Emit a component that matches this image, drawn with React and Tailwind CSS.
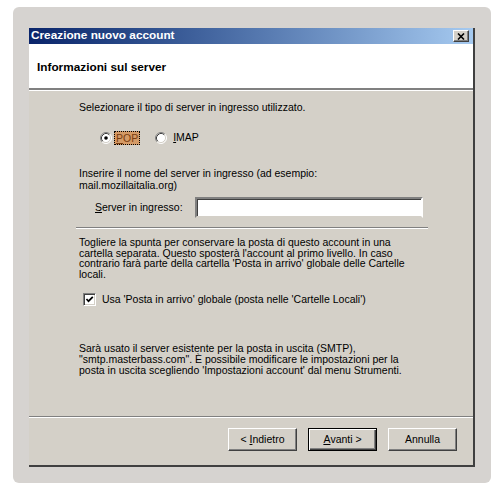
import React from 'react'

const FONT = { fontFamily: '"Liberation Sans", Arial, sans-serif' }

function Radio({ checked }) {
  return (
    <svg width="12" height="12" viewBox="0 0 12 12" className="shrink-0">
      <circle cx="6" cy="6" r="5" fill="#ffffff" />
      <path d="M2.11 9.89A5.5 5.5 0 0 1 9.89 2.11" stroke="#808080" fill="none" />
      <path d="M9.89 2.11A5.5 5.5 0 0 1 2.11 9.89" stroke="#ffffff" fill="none" />
      <path d="M2.82 9.18A4.5 4.5 0 0 1 9.18 2.82" stroke="#404040" fill="none" />
      <path d="M9.18 2.82A4.5 4.5 0 0 1 2.82 9.18" stroke="#d4d0c8" fill="none" />
      {checked && <circle cx="6" cy="6" r="1.8" fill="#000000" />}
    </svg>
  )
}

function Checkbox() {
  return (
    <div className="flex h-[13px] w-[13px] shrink-0 items-center justify-center border border-t-[#808080] border-l-[#808080] border-r-white border-b-white bg-white shadow-[inset_1px_1px_#404040,inset_-1px_-1px_#d4d0c8]">
      <svg width="9" height="9" viewBox="0 0 9 9">
        <path d="M1.5 4 L3.5 6.2 L7.8 1.8" stroke="#000" strokeWidth="1.7" fill="none" />
      </svg>
    </div>
  )
}

function Button({ children, isDefault }) {
  return (
    <button
      type="button"
      className={
        isDefault
          ? 'flex h-[23px] w-[69px] items-center justify-center border border-black bg-[#d4d0c8] text-[10.5px] text-black shadow-[inset_1px_1px_#ffffff,inset_-1px_-1px_#404040,inset_-2px_-2px_#808080]'
          : 'flex h-[23px] w-[69px] items-center justify-center border border-t-white border-l-white border-r-[#404040] border-b-[#404040] bg-[#d4d0c8] text-[10.5px] text-black shadow-[inset_-1px_-1px_#808080]'
      }
    >
      {children}
    </button>
  )
}

export default function App() {
  return (
    <div className="h-[497px] w-[503px] bg-white pl-[13px] pt-[7px]" style={FONT}>
      <div className="h-[476px] w-[478px] rounded-[6px] bg-[#d6d3d0] pl-[16px] pt-[21px]">
        <div className="flex h-[439px] w-[446px] flex-col border-r-2 border-b-2 border-r-[#404040] border-b-[#404040] bg-[#d4d0c8]">
          <div className="flex h-[16px] shrink-0 items-center justify-between bg-gradient-to-r from-[#0a246a] to-[#a6caf0] pl-[2px] pr-[4px]">
            <span className="text-[11.8px] font-bold leading-none text-white">Creazione nuovo account</span>
            <div className="flex h-[12px] w-[16px] items-center justify-center border border-t-white border-l-white border-r-[#404040] border-b-[#404040] bg-[#d4d0c8] shadow-[inset_-1px_-1px_#808080]">
              <svg width="8" height="7" viewBox="0 0 8 7">
                <path d="M1 0.5 L7 6.5 M7 0.5 L1 6.5" stroke="#000" strokeWidth="1.6" />
              </svg>
            </div>
          </div>

          <div className="h-[46px] shrink-0 border-b-2 border-b-[#808080] bg-white pl-[8px] pt-[10px] shadow-[0_1px_#ffffff]">
            <span className="text-[11.8px] font-bold leading-none text-black">Informazioni sul server</span>
          </div>

          <div className="flex flex-1 flex-col whitespace-nowrap pl-[50px] text-[10.5px] text-black">
            <p className="mt-[12px] leading-[11px]">Selezionare il tipo di server in ingresso utilizzato.</p>

            <div className="mt-[17px] flex h-[15px] items-center pl-[21px]">
              <Radio checked />
              <span className="ml-[2px] border border-dotted border-black bg-[#d49a66] px-[1px] leading-[12px] text-[#7a3d10]">
                <span className="underline">P</span>OP
              </span>
              <span className="ml-[15px]">
                <Radio />
              </span>
              <span className="ml-[6px]">
                <span className="underline">I</span>MAP
              </span>
            </div>

            <p className="mt-[22px] leading-[12px]">
              Inserire il nome del server in ingresso (ad esempio:
              <br />
              mail.mozillaitalia.org)
            </p>

            <div className="mt-[6px] flex h-[21px] items-center pl-[16px]">
              <span className="w-[100px]">
                <span className="underline">S</span>erver in ingresso:
              </span>
              <div className="h-[21px] w-[228px] border-2 border-t-[#808080] border-l-[#808080] border-r-white border-b-[#d4d0c8] bg-white shadow-[inset_1px_1px_#404040]" />
            </div>

            <div className="mt-[9px] ml-[-3px] h-[2px] w-[352px] border-t border-t-[#808080] border-b border-b-white" />

            <p className="mt-[8px] leading-[10.5px]">
              Togliere la spunta per conservare la posta di questo account in una
              <br />
              cartella separata. Questo sposterà l'account al primo livello. In caso
              <br />
              contrario farà parte della cartella 'Posta in arrivo' globale delle Cartelle
              <br />
              locali.
            </p>

            <div className="mt-[14px] flex h-[13px] items-center pl-[4px]">
              <Checkbox />
              <span className="ml-[6px]">Usa 'Posta in arrivo' globale (posta nelle 'Cartelle Locali')</span>
            </div>

            <p className="mt-[37px] leading-[11px]">
              Sarà usato il server esistente per la posta in uscita (SMTP),
              <br />
              "smtp.masterbass.com". È possibile modificare le impostazioni per la
              <br />
              posta in uscita scegliendo 'Impostazioni account' dal menu Strumenti.
            </p>
          </div>

          <div className="h-[49px] shrink-0 border-t border-t-[#808080] shadow-[inset_0_1px_#ffffff]">
            <div className="mt-[11px] flex justify-end gap-[11px] pr-[16px]">
              <Button>
                &lt;&nbsp;<span className="underline">I</span>ndietro
              </Button>
              <Button isDefault>
                <span className="underline">A</span>vanti&nbsp;&gt;
              </Button>
              <Button>Annulla</Button>
            </div>
          </div>
        </div>
      </div>
    </div>
  )
}
